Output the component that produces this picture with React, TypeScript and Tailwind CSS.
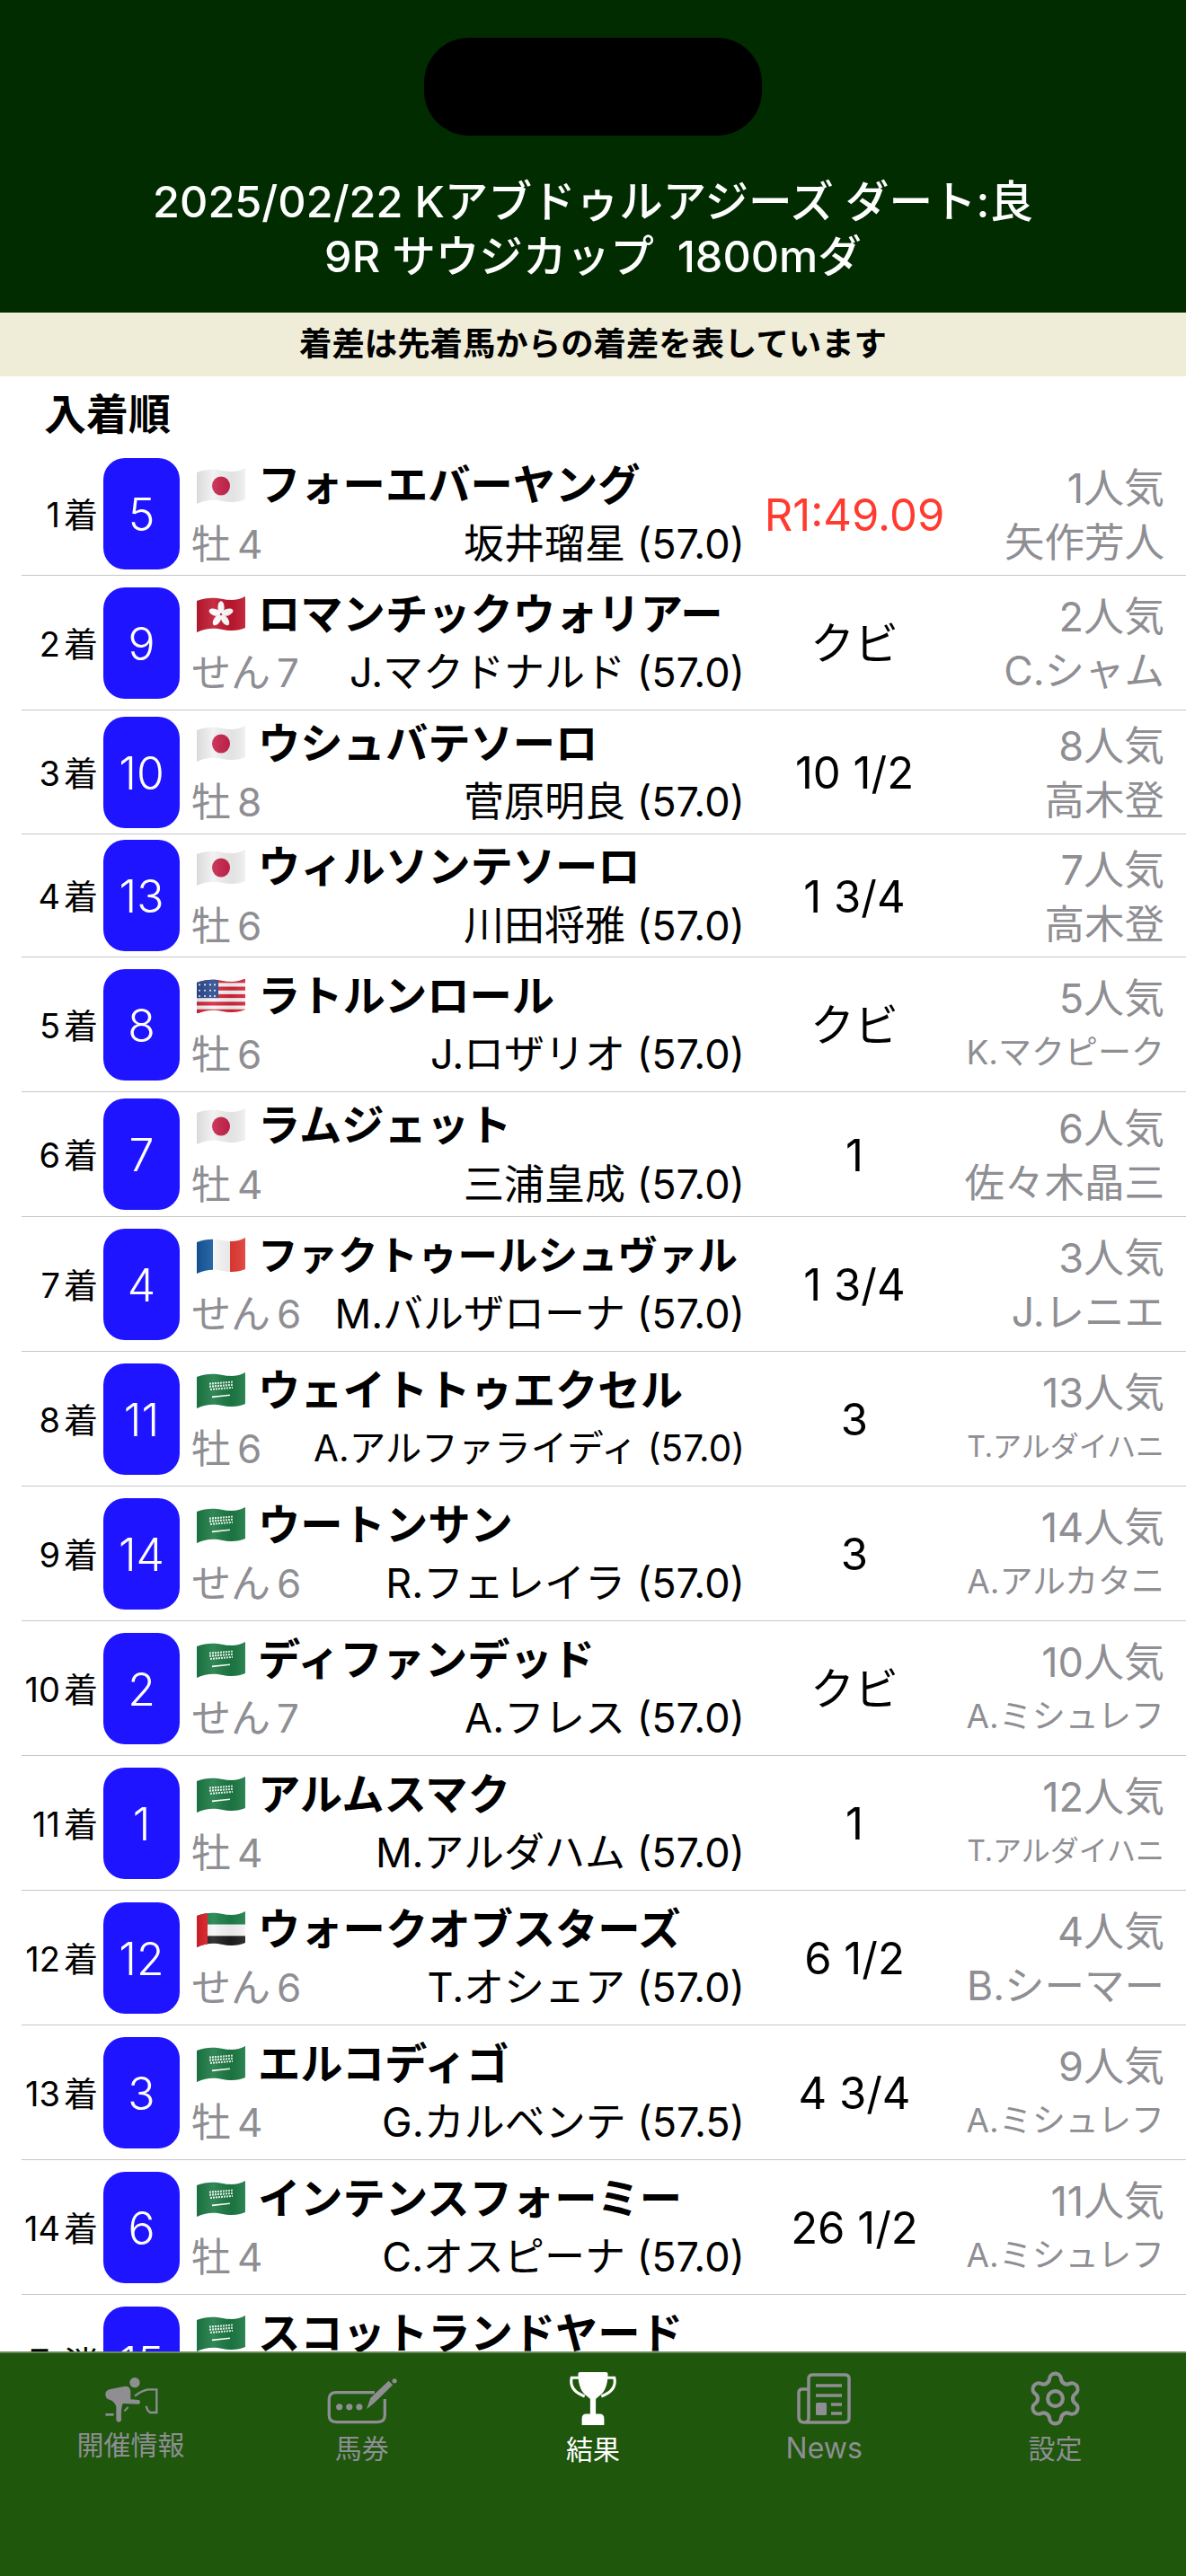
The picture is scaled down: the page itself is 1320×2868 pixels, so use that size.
import React, { useId } from "react";
import { Settings } from "lucide-react";

type FlagCode = "jp" | "hk" | "us" | "fr" | "sa" | "ae";

interface Result {
  rank: string;
  no: number;
  flag: FlagCode;
  name: string;
  nameSize?: string;
  sex: string;
  jockey: string;
  jockeySize?: string;
  margin: string;
  pop: string;
  trainer: string;
  trainerSize?: string;
  rowHeight: string;
}

const results: Result[] = [
  { rank: "1", no: 5, flag: "jp", name: "フォーエバーヤング", sex: "牡4", jockey: "坂井瑠星 (57.0)", margin: "R1:49.09", pop: "1人気", trainer: "矢作芳人", rowHeight: "h-[137px]" },
  { rank: "2", no: 9, flag: "hk", name: "ロマンチックウォリアー", sex: "せん7", jockey: "J.マクドナルド (57.0)", margin: "クビ", pop: "2人気", trainer: "C.シャム", rowHeight: "h-[150px]" },
  { rank: "3", no: 10, flag: "jp", name: "ウシュバテソーロ", sex: "牡8", jockey: "菅原明良 (57.0)", margin: "10 1/2", pop: "8人気", trainer: "高木登", rowHeight: "h-[138px]" },
  { rank: "4", no: 13, flag: "jp", name: "ウィルソンテソーロ", sex: "牡6", jockey: "川田将雅 (57.0)", margin: "1 3/4", pop: "7人気", trainer: "高木登", rowHeight: "h-[137px]" },
  { rank: "5", no: 8, flag: "us", name: "ラトルンロール", sex: "牡6", jockey: "J.ロザリオ (57.0)", margin: "クビ", pop: "5人気", trainer: "K.マクピーク", trainerSize: "text-[37px]", rowHeight: "h-[150px]" },
  { rank: "6", no: 7, flag: "jp", name: "ラムジェット", sex: "牡4", jockey: "三浦皇成 (57.0)", margin: "1", pop: "6人気", trainer: "佐々木晶三", rowHeight: "h-[139px]" },
  { rank: "7", no: 4, flag: "fr", name: "ファクトゥールシュヴァル", nameSize: "text-[44.5px]", sex: "せん6", jockey: "M.バルザローナ (57.0)", margin: "1 3/4", pop: "3人気", trainer: "J.レニエ", rowHeight: "h-[150px]" },
  { rank: "8", no: 11, flag: "sa", name: "ウェイトトゥエクセル", sex: "牡6", jockey: "A.アルファライディ (57.0)", jockeySize: "text-[40.5px]", margin: "3", pop: "13人気", trainer: "T.アルダイハニ", trainerSize: "text-[32px]", rowHeight: "h-[150px]" },
  { rank: "9", no: 14, flag: "sa", name: "ウートンサン", sex: "せん6", jockey: "R.フェレイラ (57.0)", margin: "3", pop: "14人気", trainer: "A.アルカタニ", trainerSize: "text-[37px]", rowHeight: "h-[150px]" },
  { rank: "10", no: 2, flag: "sa", name: "ディファンデッド", sex: "せん7", jockey: "A.フレス (57.0)", margin: "クビ", pop: "10人気", trainer: "A.ミシュレフ", trainerSize: "text-[37px]", rowHeight: "h-[150px]" },
  { rank: "11", no: 1, flag: "sa", name: "アルムスマク", sex: "牡4", jockey: "M.アルダハム (57.0)", margin: "1", pop: "12人気", trainer: "T.アルダイハニ", trainerSize: "text-[32px]", rowHeight: "h-[150px]" },
  { rank: "12", no: 12, flag: "ae", name: "ウォークオブスターズ", sex: "せん6", jockey: "T.オシェア (57.0)", margin: "6 1/2", pop: "4人気", trainer: "B.シーマー", rowHeight: "h-[150px]" },
  { rank: "13", no: 3, flag: "sa", name: "エルコディゴ", sex: "牡4", jockey: "G.カルベンテ (57.5)", margin: "4 3/4", pop: "9人気", trainer: "A.ミシュレフ", trainerSize: "text-[37px]", rowHeight: "h-[150px]" },
  { rank: "14", no: 6, flag: "sa", name: "インテンスフォーミー", sex: "牡4", jockey: "C.オスピーナ (57.0)", margin: "26 1/2", pop: "11人気", trainer: "A.ミシュレフ", trainerSize: "text-[37px]", rowHeight: "h-[150px]" },
  { rank: "取消", no: 15, flag: "sa", name: "スコットランドヤード", sex: "", jockey: "", margin: "", pop: "", trainer: "", rowHeight: "h-[150px]" },
];

const FONT = "font-['Inter','Noto_Sans_CJK_JP',sans-serif]";

const FlagBody = ({ code }: { code: FlagCode }) => {
  switch (code) {
    case "jp":
      return (
        <>
          <rect width="56" height="40" fill="#f1f1f1" />
          <circle cx="28" cy="20" r="10" fill="#c5234a" />
        </>
      );
    case "hk":
      return (
        <>
          <rect width="56" height="40" fill="#c0182f" />
          {[0, 72, 144, 216, 288].map((a) => (
            <ellipse key={a} cx="28" cy="12.5" rx="3.6" ry="6.5" fill="#fff" transform={`rotate(${a} 28 20)`} />
          ))}
        </>
      );
    case "us":
      return (
        <>
          <rect width="56" height="40" fill="#f3f3f3" />
          {[2, 10, 18, 26, 34].map((y) => (
            <rect key={y} y={y} width="56" height="4" fill="#d3273a" />
          ))}
          <rect width="25" height="22" fill="#2c4a8f" />
          {[5, 11, 17].map((y) =>
            [4, 10, 16, 21].map((x) => <circle key={`${x}-${y}`} cx={x} cy={y + 3} r="1" fill="#fff" />)
          )}
        </>
      );
    case "fr":
      return (
        <>
          <rect width="19" height="40" fill="#14589c" />
          <rect x="19" width="19" height="40" fill="#f6f6f6" />
          <rect x="38" width="18" height="40" fill="#e23b34" />
        </>
      );
    case "sa":
      return (
        <>
          <rect width="56" height="40" fill="#1c7a44" />
          <path d="M15 13 L41 11 M15 16 L41 14 M16 19 L41 17" stroke="#e8f2ea" strokeWidth="2" strokeDasharray="2 1" />
          <path d="M18 27 L38 25" stroke="#fff" strokeWidth="1.5" />
        </>
      );
    case "ae":
      return (
        <>
          <rect width="56" height="15" fill="#1d8049" />
          <rect y="15" width="56" height="12" fill="#f6f6f6" />
          <rect y="27" width="56" height="13" fill="#1e1e1e" />
          <rect width="13" height="40" fill="#dc1f26" />
        </>
      );
  }
};

// emoji style flag with a slight wave
const Flag = ({ code }: { code: FlagCode }) => {
  const id = useId();
  return (
    <svg width="56" height="42" viewBox="0 0 56 42" className="shrink-0">
      <defs>
        <clipPath id={`${id}c`}>
          <path d="M1 6 C12 2 20 2 30 4 C40 6 48 5 55 1 V36 C48 39 40 40 30 38 C20 36 12 36 1 41 Z" />
        </clipPath>
        <linearGradient id={`${id}g`} x1="0" x2="1" y1="0" y2="0">
          <stop offset="0" stopColor="#000" stopOpacity="0.1" />
          <stop offset="0.35" stopColor="#fff" stopOpacity="0.1" />
          <stop offset="0.7" stopColor="#000" stopOpacity="0.06" />
          <stop offset="1" stopColor="#fff" stopOpacity="0.1" />
        </linearGradient>
      </defs>
      <g clipPath={`url(#${id}c)`}>
        <g transform="scale(1 1.05)">
          <FlagBody code={code} />
        </g>
        <rect width="56" height="42" fill={`url(#${id}g)`} />
      </g>
    </svg>
  );
};

const Row = ({ r }: { r: Result }) => (
  <div className={`${r.rowHeight} ml-[24px] flex items-center border-b border-[#c6c6c8] whitespace-nowrap`}>
    <div className="w-[85px] pt-[3px] text-right text-[38px] text-black">
      {r.rank}
      {r.no !== 15 && <span className="ml-[4px]">着</span>}
    </div>
    <div className="ml-[6px] w-[85px] h-[124px] pt-[3px] rounded-[24px] bg-[#1f14ff] text-white flex items-center justify-center text-[50px] font-light shrink-0">
      {r.no}
    </div>
    <div className="ml-[13px] w-[617px] shrink-0">
      <div className="h-[66px] flex items-center pl-[5px] pt-[3px]">
        <Flag code={r.flag} />
        <span className={`ml-[13px] font-bold text-black ${r.nameSize ?? "text-[47.3px]"}`}>{r.name}</span>
      </div>
      <div className="h-[66px] flex items-center justify-between pr-[1px] pt-[1px]">
        <span className="text-[44px] text-[#8e8e93]">
          {r.sex.slice(0, -1)}
          <span className="ml-[7px]">{r.sex.slice(-1)}</span>
        </span>
        <span className={`text-black ${r.jockeySize ?? "text-[45px]"}`}>{r.jockey}</span>
      </div>
    </div>
    <div className={`w-[242px] pt-[3px] shrink-0 text-center text-[49px] ${r.margin.startsWith("R") ? "text-[#ff3b30]" : "text-black"}`}>
      {r.margin}
    </div>
    <div className="w-[224px] pt-[3px] shrink-0 text-right text-[#8e8e93]">
      <div className="h-[60px] leading-[60px] text-[45px]">{r.pop}</div>
      <div className={`h-[60px] leading-[60px] ${r.trainerSize ?? "text-[44.5px]"}`}>{r.trainer}</div>
    </div>
  </div>
);

const RiderIcon = () => (
  <svg width="62" height="54" viewBox="225 70 186 162" className="text-[#8e8e93]" fill="currentColor">
    <circle cx="330" cy="90" r="17" />
    <path d="M232 128 Q232 118 245 113 L298 102 Q314 102 316 118 L316 146 L344 148 Q352 155 344 162 L290 160 Q283 175 285 216 Q277 228 268 216 L268 170 Q262 150 240 145 Q232 140 232 128Z" />
    <path d="M232 197 H260" stroke="currentColor" strokeWidth="8" fill="none" />
    <path d="M295 185 L308 172" stroke="currentColor" strokeWidth="6" fill="none" />
    <path d="M330 135 Q350 118 375 113 H403 V190 H382 Q372 185 368 168" stroke="currentColor" strokeWidth="7" fill="none" />
  </svg>
);

const TicketIcon = () => (
  <svg width="80" height="54" viewBox="965 75 245 162" className="text-[#8e8e93]" fill="currentColor">
    <path d="M1130 127 H1000 Q975 127 975 150 V205 Q975 228 1000 228 H1140 Q1165 228 1165 205 V150" fill="none" stroke="currentColor" strokeWidth="10" />
    <circle cx="1010" cy="177" r="11" />
    <circle cx="1044" cy="177" r="11" />
    <circle cx="1078" cy="177" r="11" />
    <path d="M1103 184 L1116 146 L1178 88 L1192 102 L1130 162 Z" />
    <circle cx="1198" cy="88" r="8" />
  </svg>
);

const TrophyIcon = () => (
  <svg width="54" height="60" viewBox="0 0 52 58" className="text-white" fill="currentColor">
    <path d="M12 1 H40 Q42 1 42 3 C42 16 38 24 31 28 L29 30 V46 H33 Q38 46 38 51 V58 H14 V51 Q14 46 19 46 H23 V30 L21 28 C14 24 10 16 10 3 Q10 1 12 1 Z" />
    <path d="M11 7 H3 C1 16 6 23 17 27 M41 7 H49 C51 16 46 23 35 27" fill="none" stroke="currentColor" strokeWidth="3" />
  </svg>
);

const NewsIcon = () => (
  <svg width="60" height="58" viewBox="0 0 60 58" fill="none" stroke="currentColor" strokeWidth="3.5" className="text-[#8e8e93]">
    <path d="M13 18 H6 Q2 18 2 22 V49 Q2 55 8 55 H53 Q58 55 58 50 V6 Q58 2 53 2 H18 Q13 2 13 6 V50 Q13 55 8 55" />
    <path d="M21 14 H50 M21 25 H50 M38 35 H50 M38 45 H50" />
    <rect x="21" y="33" width="12" height="14" rx="1.5" fill="currentColor" stroke="none" />
  </svg>
);

const tabs = [
  { label: "開催情報", icon: <RiderIcon />, labelClass: "mt-[2px]" },
  { label: "馬券", icon: <TicketIcon />, labelClass: "mt-[6px]" },
  { label: "結果", icon: <TrophyIcon />, labelClass: "mt-[7px] text-white" },
  { label: "News", icon: <NewsIcon />, labelClass: "mt-[6px] text-[32px]" },
  { label: "設定", icon: <Settings size={67} strokeWidth={1.5} className="text-[#8e8e93] -my-[4px]" />, labelClass: "mt-[6px]" },
];

export default function App() {
  return (
    <div className={`${FONT} w-[1320px] h-[2868px] flex flex-col overflow-hidden bg-white`}>
      <header className="h-[348px] shrink-0 bg-[#012c00] flex flex-col items-center">
        <div className="mt-[42px] w-[376px] h-[109px] rounded-[50px] bg-black" />
        <div className="mt-[43px] text-center text-white text-[48.6px] leading-[61px] font-medium whitespace-pre">
          {"2025/02/22 Kアブドゥルアジーズ ダート:良\n9R サウジカップ  1800mダ"}
        </div>
      </header>
      <div className="h-[71px] shrink-0 bg-[#efedd8] flex items-center justify-center text-[36.4px] font-semibold text-black">
        着差は先着馬からの着差を表しています
      </div>
      <main className="flex-1 overflow-hidden">
        <div className="h-[85px] pl-[49px] pt-[12px] text-[47px] leading-[60px] font-bold text-black">入着順</div>
        {results.map((r) => (
          <Row key={r.no} r={r} />
        ))}
      </main>
      <nav className="h-[250px] shrink-0 bg-[#1f570d] border-t-2 border-[#6a8a5a] px-[17px] pt-[22px] grid grid-cols-5 items-start">
        {tabs.map((t) => (
          <div key={t.label} className="flex flex-col items-center">
            <div className="h-[58px] flex items-end justify-center">{t.icon}</div>
            <div className={`text-[30px] leading-[40px] text-[#8e8e93] ${t.labelClass}`}>{t.label}</div>
          </div>
        ))}
      </nav>
    </div>
  );
}
